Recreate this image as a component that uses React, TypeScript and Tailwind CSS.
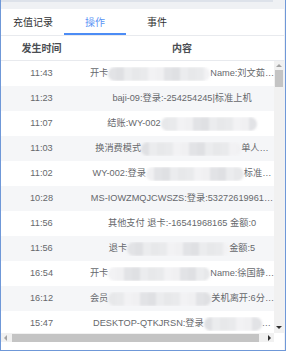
import React from "react";

type Part = string | { blur: number };

const rows: { time: string; parts: Part[] }[] = [
  { time: "11:43", parts: ["开卡", { blur: 102 }, "Name:刘文茹…"] },
  { time: "11:23", parts: ["baji-09:登录:-254254245|标准上机"] },
  { time: "11:07", parts: ["结账:WY-002", { blur: 96 }] },
  { time: "11:03", parts: ["换消费模式", { blur: 100 }, "单人…"] },
  { time: "11:02", parts: ["WY-002:登录", { blur: 98 }, "标准…"] },
  { time: "10:28", parts: ["MS-IOWZMQJCWSZS:登录:53272619961…"] },
  { time: "11:56", parts: ["其他支付 退卡:-16541968165 金额:0"] },
  { time: "11:56", parts: ["退卡", { blur: 102 }, "金额:5"] },
  { time: "16:54", parts: ["开卡", { blur: 102 }, "Name:徐国静…"] },
  { time: "16:12", parts: ["会员", { blur: 103 }, "关机离开:6分…"] },
  { time: "15:47", parts: ["DESKTOP-QTKJRSN:登录", { blur: 58 }, " …"] },
];

const shades = ["#ebecee", "#e2e3e6", "#f2f2f4", "#e7e8ea", "#dfe0e3", "#f0f0f2", "#e9eaec"];

const Mosaic = ({ width, seed }: { width: number; seed: number }) => {
  const count = Math.ceil(width / 8);
  return (
    <span
      className="inline-flex h-[14px] shrink-0 overflow-hidden rounded-full blur-[0.8px]"
      style={{ width }}
    >
      {Array.from({ length: count }).map((_, i) => (
        <span
          key={i}
          className="h-full w-[8px] shrink-0"
          style={{ background: shades[(i * 3 + seed) % shades.length] }}
        />
      ))}
    </span>
  );
};

const tabs = ["充值记录", "操作", "事件"];

export default function App() {
  return (
    <div className="flex h-[351px] w-[286px] flex-col overflow-hidden border-x border-b border-[#6f98d8] bg-[#eff1f4] font-['Liberation_Sans','Noto_Sans_CJK_SC',sans-serif] text-[9.2px] text-[#66686c]">
      <div className="mr-[12px] h-[9px] shrink-0 border-t-2 border-[#dde2ea]" />
      <div className="mr-[1px] flex min-h-0 flex-1 flex-col bg-white">
        {/* tabs */}
        <div className="flex h-[27px] shrink-0 border-b border-[#e8eaee] pl-[1px]">
          {tabs.map((t, i) => (
            <div
              key={t}
              className={
                i === 1
                  ? "flex w-[62px] items-center justify-center border-b-2 border-[#4c8cf5] pt-[2px] text-[10px] text-[#5a93f5]"
                  : "flex w-[62px] items-center justify-center text-[10px] text-[#303133]"
              }
            >
              {t}
            </div>
          ))}
        </div>
        {/* header */}
        <div className="flex h-[25px] shrink-0 border-b border-[#e8eaee] pt-[1px] text-[10px] font-semibold text-[#4a4d52]">
          <div className="flex w-[81px] items-center justify-center">发生时间</div>
          <div className="flex flex-1 items-center justify-center pl-[8px] pr-[10px]">内容</div>
        </div>
        {/* body */}
        <div className="grid min-h-0 flex-1 grid-cols-[1fr_10px] grid-rows-[1fr_9px] pb-[8px]">
          <div className="overflow-hidden">
            {rows.map((r, i) => (
              <div
                key={i}
                className={
                  i % 2 === 1
                    ? "flex h-[25px] items-center bg-[#f5f6f8]"
                    : "flex h-[25px] items-center bg-white"
                }
              >
                <div className="w-[81px] shrink-0 text-center">{r.time}</div>
                <div className="flex min-w-0 flex-1 items-center justify-center overflow-hidden whitespace-nowrap pl-[8px]">
                  {r.parts.map((p, j) =>
                    typeof p === "string" ? (
                      <span key={j}>{p}</span>
                    ) : (
                      <Mosaic key={j} width={p.blur} seed={i + j} />
                    )
                  )}
                </div>
              </div>
            ))}
          </div>
          {/* vertical scrollbar */}
          <div className="flex flex-col items-center bg-[#f1f1f1]">
            <div className="mt-[3px] h-0 w-0 border-x-[3px] border-b-[3px] border-x-transparent border-b-[#a3a3a3]" />
            <div className="mt-[3px] h-[17px] w-[8px] bg-[#c4c4c4]" />
            <div className="flex-1" />
            <div className="mb-[4px] h-0 w-0 border-x-[3px] border-t-[3px] border-x-transparent border-t-[#303030]" />
          </div>
          {/* horizontal scrollbar */}
          <div className="flex items-center bg-[#f1f1f1]">
            <div className="ml-[3px] h-0 w-0 border-y-[3px] border-r-[3px] border-y-transparent border-r-[#a3a3a3]" />
            <div className="ml-[5px] h-[8px] w-[247px] bg-[#c4c4c4]" />
            <div className="flex-1" />
            <div className="mr-[3px] h-0 w-0 border-y-[3px] border-l-[3px] border-y-transparent border-l-[#303030]" />
          </div>
          <div className="bg-white" />
        </div>
      </div>
    </div>
  );
}
